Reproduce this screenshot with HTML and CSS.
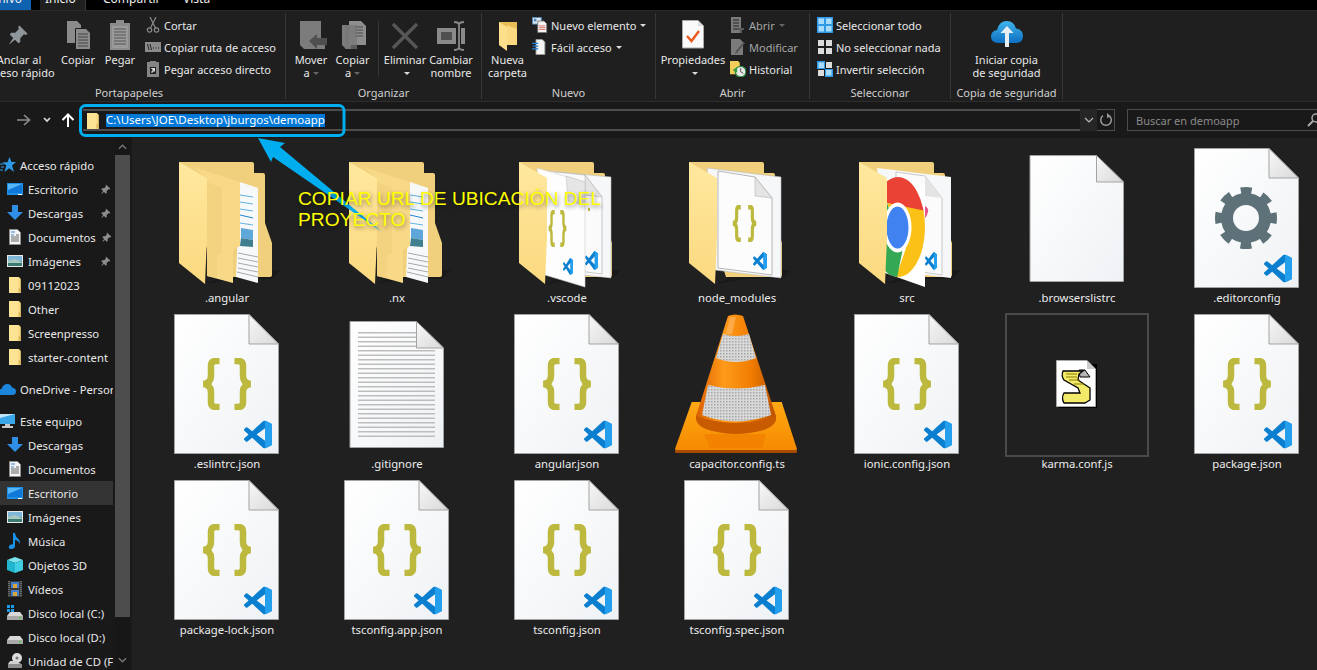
FILE: index.html
```html
<!DOCTYPE html>
<html lang="es">
<head>
<meta charset="utf-8">
<title>demoapp</title>
<link rel="stylesheet" href="styles.css">
</head>
<body>
<svg class="defs" aria-hidden="true">
  <defs>
    <linearGradient id="gFront" x1="0" y1="0" x2="0" y2="1"><stop offset="0" stop-color="#ffe89e"/><stop offset="1" stop-color="#fbd980"/></linearGradient>
    <linearGradient id="gPage" x1="0" y1="0" x2="1" y2="1"><stop offset="0" stop-color="#ffffff"/><stop offset="1" stop-color="#eff2f5"/></linearGradient>
    <linearGradient id="gFold" x1="0" y1="0" x2="1" y2="1"><stop offset="0" stop-color="#f8f8f8"/><stop offset="1" stop-color="#d9d9d9"/></linearGradient>
    <linearGradient id="gCone" x1="0" y1="0" x2="1" y2="0"><stop offset="0" stop-color="#d95f00"/><stop offset=".35" stop-color="#ff9a1a"/><stop offset=".7" stop-color="#f07c00"/><stop offset="1" stop-color="#b94f00"/></linearGradient>
    <linearGradient id="gBase" x1="0" y1="0" x2="0" y2="1"><stop offset="0" stop-color="#ffa913"/><stop offset="1" stop-color="#f58a00"/></linearGradient>
    <linearGradient id="gCloud" x1="0" y1="0" x2="0" y2="1"><stop offset="0" stop-color="#3fb4ef"/><stop offset="1" stop-color="#0f6fc0"/></linearGradient>
    <pattern id="pMesh" width="3" height="3" patternUnits="userSpaceOnUse"><rect width="3" height="3" fill="#d8d8d8"/><rect width="1.500" height="1.500" fill="#a8a8a8"/></pattern>
    <clipPath id="cChrome"><ellipse cx="62" cy="79" rx="27" ry="50"/></clipPath>

    <symbol id="vs" viewBox="0 0 24 24" preserveAspectRatio="none">
      <path fill="#0a7fd0" d="M23.15 2.587L18.21.21a1.494 1.494 0 0 0-1.705.29l-9.46 8.63-4.12-3.128a.999.999 0 0 0-1.276.057L.327 7.261A1 1 0 0 0 .326 8.74L3.899 12 .326 15.26a1 1 0 0 0 .001 1.479L1.65 17.94a.999.999 0 0 0 1.276.057l4.12-3.128 9.46 8.63a1.492 1.492 0 0 0 1.704.29l4.942-2.377A1.5 1.5 0 0 0 24 20.06V3.939a1.5 1.5 0 0 0-.85-1.352zm-5.146 14.861L10.826 12l7.178-5.448v10.896z"/>
      <path fill="#239fee" d="M18 .1l5.15 2.487A1.5 1.5 0 0 1 24 3.939V20.06a1.5 1.5 0 0 1-.85 1.352L18 23.9z"/>
    </symbol>
    <symbol id="braces" viewBox="45 44 51 52" preserveAspectRatio="none">
      <path fill="none" stroke="#bdb93f" stroke-width="6.500" d="M63 47H59Q54.500 47 54.500 52V62Q54.500 69 47 70Q54.500 71 54.500 78V88Q54.500 93 59 93H63M78 47H82Q86.500 47 86.500 52V62Q86.500 69 94 70Q86.500 71 86.500 78V88Q86.500 93 82 93H78"/>
    </symbol>
    <symbol id="page" viewBox="0 0 142 142">
      <path fill="url(#gPage)" stroke="#a3a3a3" d="M18.5.5H93L122.5 30V139.5H18.5z"/>
      <path fill="url(#gFold)" stroke="#a3a3a3" d="M93 .5V30H122.5z"/>
    </symbol>
    <symbol id="blank" viewBox="0 0 142 142">
      <path fill="url(#gPage)" stroke="#a3a3a3" d="M24 7.5H90.5L117.5 34V133.5H24z"/>
      <path fill="url(#gFold)" stroke="#a3a3a3" d="M90.5 7.5V34H117.5z"/>
    </symbol>
    <symbol id="fjson" viewBox="0 0 142 142">
      <use href="#page" width="142" height="142"/>
      <use href="#braces" x="45.5" y="44" width="51" height="52"/>
      <use href="#vs" x="88" y="106.5" width="28" height="28"/>
    </symbol>
    <symbol id="fback" viewBox="0 0 142 142">
      <path fill="#111" opacity=".45" d="M50 136L80 122H125L116 131H80z"/>
      <path fill="#f0d07d" d="M23 14H96Q98 14 98 16V25H107Q109 25 109 27V75L116 95V127Q116 129 114 129H60z"/>
    </symbol>
    <symbol id="fleaf" viewBox="0 0 142 142">
      <path fill="url(#gFront)" d="M23 14L51 30V90L49 136L23 115z"/>
    </symbol>
    <symbol id="fdocs" viewBox="0 0 142 142">
      <use href="#fback" width="142" height="142"/>
      <path fill="#f7f8f9" d="M84 34L102 40V135L80 129z"/>
      <path fill="none" stroke="#62b4e4" stroke-width="1" d="M84 47L97 49M84 54L97 56M84 61L97 63M84 75L97 77"/>
      <path fill="none" stroke="#1d86d0" stroke-width="1" d="M84 67L97 70"/>
      <path fill="#5fa7d8" d="M85 80L97 82V92L85 90z"/>
      <path fill="#3f7f8f" d="M85 90L97 92V99L84 98z"/>
      <path fill="none" stroke="#a9a9a9" stroke-width="1" d="M82 105L102 109M82 110L102 114M82 115L102 119M82 120L102 124M81 124L102 129"/>
      <path fill="#f8d987" d="M37 19L84 34V98L77 102V135L51 128V30z"/>
      <path fill="#f3d280" d="M51 34L66 40V105L61 108V130L51 128z"/>
      <use href="#fleaf" width="142" height="142"/>
    </symbol>
    <symbol id="gearbig" viewBox="0 0 142 142">
      <use href="#page" width="142" height="142"/>
      <circle cx="70" cy="70" r="27.5" fill="none" stroke="#5f7178" stroke-width="7" stroke-dasharray="10.8 10.8" stroke-dashoffset="5.4"/>
      <circle cx="70" cy="70" r="19" fill="none" stroke="#5f7178" stroke-width="12"/>
      <use href="#vs" x="88" y="106.5" width="28" height="28"/>
    </symbol>

    <symbol id="i-pin" viewBox="0 0 24 24">
      <path fill="currentColor" d="M13.5 1.5L22.5 10.5 20.5 12 18.5 11.2 14.5 15.5 14.5 19.5 12.5 21 3 11.5 4.500 9.500H9L13 5.500 12.200 3.500zM6.700 15.300L8.700 17.300 2 22.500z"/>
    </symbol>
    <symbol id="i-folder" viewBox="0 0 16 16">
      <path fill="#f9dc84" d="M2 0H11.800L13.800 2V16H2z"/>
      <path fill="#dbb65c" d="M11.500 11.200H14V14L11.500 16z"/>
      <path fill="#ffe79e" d="M2 0H11V16H2z" opacity=".6"/>
    </symbol>
    <symbol id="i-desk" viewBox="0 0 16 16">
      <path fill="#1c8fe8" d="M0 2H16V14H0z"/><path fill="#55b5f5" d="M1 3H15V12H1z"/><path fill="#1078d8" d="M1 9L15 3V12H1z"/><path fill="#fff" d="M11 13H15V14H11z"/>
    </symbol>
    <symbol id="i-down" viewBox="0 0 16 16">
      <path fill="#2f8fe6" d="M5 0H11V7H16L8 15 0 7H5z"/>
    </symbol>
    <symbol id="i-doc" viewBox="0 0 16 16">
      <path fill="#f4f4f4" stroke="#8f8f8f" d="M2.500.5H10.500L13.500 3.500V15.500H2.500z"/>
      <path stroke="#3b86c9" d="M4 3H8M4 6H7"/><path stroke="#666" d="M4 8H12M4 10H12M4 12H12M9 6H12"/>
    </symbol>
    <symbol id="i-img" viewBox="0 0 16 16">
      <path fill="#e9e9e9" d="M0 2H16V14H0z"/><path fill="#7fb7d8" d="M1 3H15V8H1z"/><path fill="#3a7a72" d="M1 8H15V13H1z"/><path fill="#a8c9c0" d="M1 8L8 6 15 9V10H1z"/>
    </symbol>
    <symbol id="i-star" viewBox="0 0 16 16">
      <path fill="#2f9be8" d="M9.500 0L11.500 5H16L12 8.500 14 15 9.200 11.200 4.500 15 6.300 8.600 2.500 5.200H7.500z"/>
      <path stroke="#2f9be8" d="M0 7H4M1 10H4M0 13H3"/>
    </symbol>
    <symbol id="i-cloud" viewBox="0 0 18 12">
      <path fill="#1c86dc" d="M4 12Q0 12 0 9 0 6 3.500 6 5 1 9.500 1 13 1 14 4.500 18 5 18 8.500 18 12 14 12z"/>
    </symbol>
    <symbol id="i-pc" viewBox="0 0 16 16">
      <path fill="#bfe4f8" d="M0 1H15V11H0z"/><path fill="#3aa7ea" d="M0 5L15 1V11H0z"/><path fill="#c9c9c9" d="M5 11H10V13H13V15H2V13H5z"/>
    </symbol>
    <symbol id="i-music" viewBox="0 0 16 16">
      <path fill="#1b92e8" d="M6 0H8Q8.500 4 12 6.500 13.500 9 12.500 11 12 7.500 8 7V13Q8 16 4 16 1 16 2 13 3 11 6 11.200z"/>
    </symbol>
    <symbol id="i-cube" viewBox="0 0 16 16">
      <path fill="#7ce3ee" d="M8 0L16 3 8 6 0 3z"/><path fill="#20b6cf" d="M0 3L8 6V16L0 13z"/><path fill="#3fcfe2" d="M16 3L8 6V16L16 13z"/>
    </symbol>
    <symbol id="i-film" viewBox="0 0 16 16">
      <path fill="#3b3b3b" d="M1 0H15V16H1z"/><path fill="#3f7fce" d="M4 1H12V7H4z"/><path fill="#3f7fce" d="M4 9H12V15H4z"/><path fill="#d9a53a" d="M6 3H10V7H6zM6 11H10V15H6z"/>
      <path stroke="#999" stroke-dasharray="1 1" d="M2 0V16M14 0V16"/>
    </symbol>
    <symbol id="i-drive" viewBox="0 0 16 16">
      <path fill="#d8d8d8" d="M3 7H13L16 11H0z"/><path fill="#a9a9a9" d="M0 11H16V15H0z"/><path fill="#3fd13f" d="M12 12H14V13.500H12z"/>
    </symbol>
    <symbol id="i-cd" viewBox="0 0 16 16">
      <circle cx="10" cy="5" r="5" fill="#dcdcdc"/><circle cx="10" cy="5" r="1.500" fill="#777"/>
      <path fill="#d0d0d0" d="M3 8H9L14 11H1z"/><path fill="#8c8c8c" d="M1 11H15V15H1z"/>
    </symbol>
    <symbol id="i-sel-all" viewBox="0 0 16 16">
      <path fill="#2f9be8" d="M0 0H16V16H0z"/><path fill="#a9dcfb" d="M1.500 1.500H7V7H1.500zM9 1.500H14.500V7H9zM1.500 9H7V14.500H1.500zM9 9H14.500V14.500H9z"/>
    </symbol>
    <symbol id="i-sel-none" viewBox="0 0 16 16">
      <path fill="#dcdcdc" d="M1 1H7V7H1zM9 1H15V7H9zM1 9H7V15H1zM9 9H15V15H9z"/>
    </symbol>
    <symbol id="i-sel-inv" viewBox="0 0 16 16">
      <path fill="#2f9be8" d="M0 0H8V8H0zM8 8H16V16H8z"/><path fill="#a9dcfb" d="M1.500 1.500H7V7H1.500zM9 9H14.500V14.500H9z"/><path fill="#dcdcdc" d="M9 1H15V7H9zM1 9H7V15H1z"/>
    </symbol>
  </defs>
</svg>

<div class="window">
  <nav class="tabs">
    <span class="tab tab-file"><span class="tab-text">Archivo</span></span>
    <span class="tab tab-home"><span class="tab-text">Inicio</span></span>
    <span class="tab tab-share"><span class="tab-text">Compartir</span></span>
    <span class="tab tab-view"><span class="tab-text">Vista</span></span>
  </nav>

  <section class="ribbon">
    <div class="group g-clip">
      <div class="tools">
        <div class="big w-pin">
          <svg class="ico32 pin-col" viewBox="0 0 32 32"><use href="#i-pin" x="4" y="5" width="22" height="22"/></svg>
          <span>Anclar al<br>acceso rápido</span>
        </div>
        <div class="big w-42">
          <svg class="ico32" viewBox="0 0 32 32"><path fill="#8b8b8b" d="M5 2H15L19 6V24H5z"/><path fill="#8b8b8b" stroke="#1f1f1f" d="M13.500 9.500H24L28.500 14V30.500H13.500z"/><path stroke="#444" d="M16 15H26M16 18H26M16 21H26M16 24H26M16 27H26"/></svg>
          <span>Copiar</span>
        </div>
        <div class="big w-42">
          <svg class="ico32" viewBox="0 0 32 32"><path fill="#8b8b8b" d="M6 4H12V1H20V4H26V31H6z"/><path fill="#9a9a9a" d="M8 7H24V29H8z"/><path stroke="#555" d="M10 10H22M10 13H22M10 16H22M10 19H22M10 22H22M10 25H22"/></svg>
          <span>Pegar</span>
        </div>
        <div class="list">
          <div class="small"><svg class="ico16" viewBox="0 0 16 16"><path fill="none" stroke="#8a8a8a" stroke-width="1.200" d="M5 0L10.500 11M11 0L5.500 11"/><circle cx="4.500" cy="13" r="2.200" fill="none" stroke="#8a8a8a" stroke-width="1.200"/><circle cx="11.500" cy="13" r="2.200" fill="none" stroke="#8a8a8a" stroke-width="1.200"/></svg><span>Cortar</span></div>
          <div class="small"><svg class="ico16" viewBox="0 0 16 16"><path fill="#8a8a8a" d="M0 3H16V13H0z"/><path stroke="#222" d="M2.500 5L4 11M5 5L6.500 11M8 9H9M10.500 9H11.500M13 9H14"/></svg><span>Copiar ruta de acceso</span></div>
          <div class="small"><svg class="ico16" viewBox="0 0 16 16"><path fill="#858585" d="M2 1H5V0H11V1H14V16H2z"/><path fill="#222" d="M5 6H11V13H5z"/><path fill="#ddd" d="M6 7H10V11L9 10 7 12 6 11 8 9 6.500 8z"/></svg><span>Pegar acceso directo</span></div>
        </div>
      </div>
      <div class="glabel">Portapapeles</div>
    </div>

    <div class="group g-org">
      <div class="tools">
        <div class="big w-42">
          <svg class="ico32" viewBox="0 0 32 32"><path fill="#7c7c7c" d="M5 2H26V22H30V30H9L5 26z"/><path fill="#4f4f4f" d="M14 22L22 15V19H32V26H22V30z"/></svg>
          <span>Mover<br>a<i class="caret dim"></i></span>
        </div>
        <div class="big w-41">
          <svg class="ico32" viewBox="0 0 32 32"><path fill="#7c7c7c" d="M5 6H14V30H9L5 26z"/><path fill="#8e8e8e" d="M12 2H24L29 7V26H12z"/><path stroke="#4a4a4a" d="M18 8H26M18 11H26M18 14H26M18 17H26"/><path fill="#767676" d="M8 6H20V30H8z" opacity=".7"/></svg>
          <span>Copiar<br>a<i class="caret dim"></i></span>
        </div>
        <div class="rule"></div>
        <div class="big w-42">
          <svg class="ico32" viewBox="0 0 32 32"><path fill="none" stroke="#565656" stroke-width="3.500" d="M4 5L28 29M28 5L4 29"/></svg>
          <span>Eliminar<br><i class="caret"></i></span>
        </div>
        <div class="big w-50">
          <svg class="ico32 wide" viewBox="0 0 32 32"><path fill="#8a8a8a" d="M2 9H21V25H2z"/><path fill="#4f4f4f" d="M6 13H17V21H6z"/><path fill="none" stroke="#888" stroke-width="1.800" d="M19 3Q23 3 24 5Q25 3 29 3M24 5V29M19 31Q23 31 24 29Q25 31 29 31"/><path fill="#8a8a8a" d="M26 9H30V25H26z"/></svg>
          <span>Cambiar<br>nombre</span>
        </div>
      </div>
      <div class="glabel">Organizar</div>
    </div>

    <div class="group g-new">
      <div class="tools">
        <div class="big w-nf">
          <svg class="ico32" viewBox="0 0 32 32"><path fill="#e7bd55" d="M7 3H25V26H15z"/><path fill="#fbd980" d="M15 6L25 10V26H15z"/><path fill="#fde08c" d="M7 3L15 8V32L7 26z"/></svg>
          <span>Nueva<br>carpeta</span>
        </div>
        <div class="list">
          <div class="small"><svg class="ico16 up1" viewBox="0 0 18 18"><path fill="#dfe7ee" stroke="#4e87b8" d="M.500.500H10.500V8H.500z"/><path fill="#4e87b8" d="M2 2H5V5H2z"/><path fill="#f4f4f4" stroke="#777" d="M6.500 4.500H13.500L16.500 7.500V17.500H6.500z"/><path stroke="#d76b5a" d="M8 10H15M8 12H15M8 14H15"/></svg><span>Nuevo elemento</span><i class="caret"></i></div>
          <div class="small"><svg class="ico16 up1" viewBox="0 0 18 18"><path fill="#f5f5f5" stroke="#999" d="M4.500.500H11.500L14.500 3.500V17.500H4.500z"/><path stroke="#1c7fd8" stroke-width="1.400" d="M0 5H7M1 8H7M0 11H7"/></svg><span>Fácil acceso</span><i class="caret"></i></div>
        </div>
      </div>
      <div class="glabel">Nuevo</div>
    </div>

    <div class="group g-open">
      <div class="tools">
        <div class="big w-prop">
          <svg class="ico32" viewBox="0 0 32 32"><path fill="#fafafa" stroke="#aaa" d="M5.500 4.500H21L26.500 10V32H5.500z" transform="translate(0 -3)"/><path fill="#ddd" d="M21 1.500V7H26.500z"/><path fill="none" stroke="#ea5a1c" stroke-width="2.400" d="M10 17L14.500 22L22 12"/></svg>
          <span>Propiedades<br><i class="caret"></i></span>
        </div>
        <div class="list">
          <div class="small dim-text"><svg class="ico16" viewBox="0 0 16 16"><path fill="#7b7b7b" d="M1 0H11V16H1z"/><path stroke="#222" d="M3 3H9M3 6H9M3 9H9M3 12H9"/><path fill="#5c5c5c" d="M9 11H14V13H12V16H10z"/></svg><span>Abrir</span><i class="caret dim"></i></div>
          <div class="small dim-text"><svg class="ico16" viewBox="0 0 16 16"><path fill="#7b7b7b" d="M1 0H10L13 3V16H1z"/><path fill="#555" d="M15 4L7 14 5 15 6 12 13.500 3z"/></svg><span>Modificar</span></div>
          <div class="small"><svg class="ico16" viewBox="0 0 18 18"><path fill="#f2cd5a" d="M0 0H9L11 2V15H0z"/><circle cx="12" cy="12" r="6" fill="#e8e8e8" stroke="#2b8a3e" stroke-width="1.500"/><path fill="none" stroke="#444" d="M12 8V12L15 14"/><path fill="#2d9a3f" d="M3 10L8 7V13z"/></svg><span>Historial</span></div>
        </div>
      </div>
      <div class="glabel">Abrir</div>
    </div>

    <div class="group g-sel">
      <div class="tools">
        <div class="list list-sel">
          <div class="small"><svg class="ico16" viewBox="0 0 16 16"><use href="#i-sel-all"/></svg><span>Seleccionar todo</span></div>
          <div class="small"><svg class="ico16" viewBox="0 0 16 16"><use href="#i-sel-none"/></svg><span>No seleccionar nada</span></div>
          <div class="small"><svg class="ico16" viewBox="0 0 16 16"><use href="#i-sel-inv"/></svg><span>Invertir selección</span></div>
        </div>
      </div>
      <div class="glabel">Seleccionar</div>
    </div>

    <div class="group g-bak">
      <div class="tools">
        <div class="big w-bak">
          <svg class="ico32" viewBox="0 0 32 32"><path fill="url(#gCloud)" d="M7 24Q0 24 0 17.500 0 12 6 11 8 2 16 2 23 2 25 9.500 32 10.500 32 17 32 24 25 24z"/><path fill="#e9eef2" d="M16 7L22.500 14H18V28H14V14H9.500z"/></svg>
          <span>Iniciar copia<br>de seguridad</span>
        </div>
      </div>
      <div class="glabel">Copia de seguridad</div>
    </div>
  </section>

  <section class="addressbar">
    <div class="navs">
      <svg class="nav-back" viewBox="0 0 14 12"><path fill="none" stroke="#8d8d8d" stroke-width="1.600" d="M0 6H12M7 1L12.500 6 7 11"/></svg>
      <svg class="nav-caret" viewBox="0 0 8 6"><path fill="none" stroke="#ddd" stroke-width="1.700" d="M1 1L4 4 7 1"/></svg>
      <svg class="nav-up" viewBox="0 0 14 14"><path fill="none" stroke="#fff" stroke-width="2" d="M7 14V2M1.500 7L7 1.500 12.500 7"/></svg>
    </div>
    <div class="field">
      <svg class="ico16 field-ico" viewBox="0 0 16 16"><use href="#i-folder"/></svg>
      <span class="path">C:\Users\JOE\Desktop\jburgos\demoapp</span>
    </div>
    <div class="dropbtn"><svg viewBox="0 0 10 6" class="chev"><path fill="none" stroke="#bbb" stroke-width="1.200" d="M1 1L5 5 9 1"/></svg></div>
    <div class="refresh"><svg viewBox="0 0 14 14" class="ref-ico"><path fill="none" stroke="#999" stroke-width="1.500" d="M10.500 3A5.300 5.300 0 1 1 4 2.700"/><path fill="#999" d="M8 0L12 3.500 8 5z"/></svg></div>
    <div class="search"><span>Buscar en demoapp</span><svg viewBox="0 0 14 14" class="search-ico"><circle cx="9" cy="5" r="4" fill="none" stroke="#aaa" stroke-width="1.500"/><path stroke="#aaa" stroke-width="2" d="M6 8L1 13"/></svg></div>
  </section>

  <div class="body">
    <aside class="sidebar">
      <div class="tree">
        <div class="row l1 gap-after"><svg class="ico16" viewBox="0 0 16 16"><use href="#i-star"/></svg><span>Acceso rápido</span></div>
        <div class="row l2"><svg class="ico16" viewBox="0 0 16 16"><use href="#i-desk"/></svg><span>Escritorio</span><svg class="pin-mini" viewBox="0 0 24 24"><use href="#i-pin"/></svg></div>
        <div class="row l2"><svg class="ico16" viewBox="0 0 16 16"><use href="#i-down"/></svg><span>Descargas</span><svg class="pin-mini" viewBox="0 0 24 24"><use href="#i-pin"/></svg></div>
        <div class="row l2"><svg class="ico16" viewBox="0 0 16 16"><use href="#i-doc"/></svg><span>Documentos</span><svg class="pin-mini" viewBox="0 0 24 24"><use href="#i-pin"/></svg></div>
        <div class="row l2"><svg class="ico16" viewBox="0 0 16 16"><use href="#i-img"/></svg><span>Imágenes</span><svg class="pin-mini" viewBox="0 0 24 24"><use href="#i-pin"/></svg></div>
        <div class="row l2"><svg class="ico16" viewBox="0 0 16 16"><use href="#i-folder"/></svg><span>09112023</span></div>
        <div class="row l2"><svg class="ico16" viewBox="0 0 16 16"><use href="#i-folder"/></svg><span>Other</span></div>
        <div class="row l2"><svg class="ico16" viewBox="0 0 16 16"><use href="#i-folder"/></svg><span>Screenpresso</span></div>
        <div class="row l2"><svg class="ico16" viewBox="0 0 16 16"><use href="#i-folder"/></svg><span>starter-content</span></div>
        <div class="row l1 sect"><svg class="ico-cloud" viewBox="0 0 18 12"><use href="#i-cloud"/></svg><span>OneDrive - Personal</span></div>
        <div class="row l1 sect"><svg class="ico16" viewBox="0 0 16 16"><use href="#i-pc"/></svg><span>Este equipo</span></div>
        <div class="row l2"><svg class="ico16" viewBox="0 0 16 16"><use href="#i-down"/></svg><span>Descargas</span></div>
        <div class="row l2"><svg class="ico16" viewBox="0 0 16 16"><use href="#i-doc"/></svg><span>Documentos</span></div>
        <div class="row l2 active"><svg class="ico16" viewBox="0 0 16 16"><use href="#i-desk"/></svg><span>Escritorio</span></div>
        <div class="row l2"><svg class="ico16" viewBox="0 0 16 16"><use href="#i-img"/></svg><span>Imágenes</span></div>
        <div class="row l2"><svg class="ico16" viewBox="0 0 16 16"><use href="#i-music"/></svg><span>Música</span></div>
        <div class="row l2"><svg class="ico16" viewBox="0 0 16 16"><use href="#i-cube"/></svg><span>Objetos 3D</span></div>
        <div class="row l2"><svg class="ico16" viewBox="0 0 16 16"><use href="#i-film"/></svg><span>Vídeos</span></div>
        <div class="row l2"><svg class="ico16" viewBox="0 0 16 16"><use href="#i-drive"/><path fill="#1c9be8" d="M0 0H3V3H0zM4 0H7V3H4zM0 4H3V7H0zM4 4H7V7H4z"/></svg><span>Disco local (C:)</span></div>
        <div class="row l2"><svg class="ico16" viewBox="0 0 16 16"><use href="#i-drive"/></svg><span>Disco local (D:)</span></div>
        <div class="row l2"><svg class="ico16" viewBox="0 0 16 16"><use href="#i-cd"/></svg><span>Unidad de CD (F:)</span></div>
      </div>
      <div class="scrollbar">
        <svg class="sb-arrow" viewBox="0 0 10 6"><path fill="none" stroke="#777" stroke-width="1.500" d="M1 5L5 1 9 5"/></svg>
        <div class="sb-thumb"></div>
        <svg class="sb-arrow sb-down" viewBox="0 0 10 6"><path fill="none" stroke="#777" stroke-width="1.500" d="M1 1L5 5 9 1"/></svg>
      </div>
    </aside>

    <main class="files">
      <figure class="file">
        <svg class="thumb" viewBox="0 0 142 142"><use href="#fdocs"/></svg>
        <figcaption>.angular</figcaption>
      </figure>
      <figure class="file">
        <svg class="thumb" viewBox="0 0 142 142"><use href="#fdocs"/></svg>
        <figcaption>.nx</figcaption>
      </figure>
      <figure class="file">
        <svg class="thumb" viewBox="0 0 142 142">
          <use href="#fback"/>
          <path fill="#f6f7f8" stroke="#bbb" stroke-width=".6" d="M52 23L115 29V130L60 124z"/>
          <path fill="#fafafa" stroke="#aaa" stroke-width=".6" d="M60 24L89 27L106 49V126L60 120z"/>
          <path fill="#e4e4e4" stroke="#aaa" stroke-width=".5" d="M89 27V47L106 49z"/>
          <path fill="#bdb93f" d="M92 60H94V63H92z"/>
          <use href="#vs" x="89" y="103" width="13" height="19"/>
          <path fill="#fdfdfd" stroke="#ccc" stroke-width=".6" d="M41 20L89 34V139L49 127z"/>
          <path fill="#e6e6e6" stroke="#bbb" stroke-width=".5" d="M70 28L89 34V57L72 53z"/>
          <use href="#braces" x="52" y="62" width="19" height="37"/>
          <use href="#vs" x="67" y="110" width="10" height="17"/>
          <use href="#fleaf"/>
        </svg>
        <figcaption>.vscode</figcaption>
      </figure>
      <figure class="file">
        <svg class="thumb" viewBox="0 0 142 142">
          <use href="#fback"/>
          <path fill="#f6f7f8" stroke="#bbb" stroke-width=".6" d="M41 20L115 29V130L49 122z"/>
          <path fill="#fcfcfc" stroke="#999" stroke-width=".7" d="M52 23L89 29L106 50V127L52 120z"/>
          <path fill="#e4e4e4" stroke="#aaa" stroke-width=".5" d="M89 29V48L106 50z"/>
          <use href="#braces" x="66" y="57" width="25" height="37"/>
          <use href="#vs" x="87" y="104" width="14" height="18"/>
          <use href="#fleaf"/>
        </svg>
        <figcaption>node_modules</figcaption>
      </figure>
      <figure class="file">
        <svg class="thumb" viewBox="0 0 142 142">
          <use href="#fback"/>
          <path fill="#f6f7f8" d="M41 20L115 29V130L49 122z"/>
          <path fill="#fbfbfb" stroke="#aaa" stroke-width=".6" d="M60 24L89 28L106 50V127L60 120z"/>
          <path fill="#e4e4e4" d="M89 28V48L106 50z"/>
          <path fill="#e8558a" d="M89 58Q93 60 92 64 91 68 89 70z"/>
          <use href="#vs" x="89" y="104" width="12" height="18"/>
          <path fill="#fff" d="M47 29L89 37V139L49 125z"/>
          <g clip-path="url(#cChrome)">
            <path fill="#ea4335" d="M30 20H95L88 64 51 55z"/>
            <path fill="#fbc116" d="M51 55L100 65V135H58L70 100z"/>
            <path fill="#34a853" d="M30 55H51L67 100 60 135H30z"/>
            <ellipse cx="61.500" cy="79.500" rx="14" ry="25" fill="#fff"/>
            <ellipse cx="61.500" cy="79.500" rx="11" ry="21" fill="#3f82f0"/>
          </g>
          <use href="#fleaf"/>
        </svg>
        <figcaption>src</figcaption>
      </figure>
      <figure class="file">
        <svg class="thumb" viewBox="0 0 142 142"><use href="#blank"/></svg>
        <figcaption>.browserslistrc</figcaption>
      </figure>
      <figure class="file">
        <svg class="thumb" viewBox="0 0 142 142"><use href="#gearbig"/></svg>
        <figcaption>.editorconfig</figcaption>
      </figure>

      <figure class="file">
        <svg class="thumb" viewBox="0 0 142 142"><use href="#fjson"/></svg>
        <figcaption>.eslintrc.json</figcaption>
      </figure>
      <figure class="file">
        <svg class="thumb" viewBox="0 0 142 142">
          <path fill="url(#gPage)" stroke="#a3a3a3" d="M24 7.500H90.500L117.500 34V133.500H24z"/>
          <path stroke="#bdbdbd" stroke-width="77" stroke-dasharray="1.500 3" d="M70.500 36V124"/>
          <path stroke="#bdbdbd" stroke-width="58" stroke-dasharray="1.500 3" d="M61 18V33"/>
          <path fill="url(#gFold)" stroke="#a3a3a3" d="M90.500 7.500V34H117.500z"/>
        </svg>
        <figcaption>.gitignore</figcaption>
      </figure>
      <figure class="file">
        <svg class="thumb" viewBox="0 0 142 142"><use href="#fjson"/></svg>
        <figcaption>angular.json</figcaption>
      </figure>
      <figure class="file">
        <svg class="thumb" viewBox="0 0 142 142">
          <path fill="#a84b00" d="M9 136L131 136 131 138Q131 139 129 139H11Q9 139 9 138z"/>
          <path fill="url(#gBase)" d="M25.700 88H115.700L131 135Q131 136 129 136H11Q9 136 9 135z"/>
          <path fill="#f17d00" opacity=".7" d="M38 120H100L96 134H44z"/>
          <path fill="url(#gCone)" d="M62 2Q69 -1 77 2L110 102Q112 118 70 120Q28 118 30 102z"/>
          <path fill="#c85a00" d="M30 102Q28 118 70 120Q112 118 110 102Q70 116 30 102z"/>
          <path fill="url(#pMesh)" d="M57 20Q70 24 83 20L90 44Q70 52 50 44z"/>
          <path fill="url(#pMesh)" d="M42 71Q70 78 99 71L105 101Q70 114 36 101z"/>
          <path fill="#ffc37a" opacity=".5" d="M64 3H70L66 20H60z"/>
        </svg>
        <figcaption>capacitor.config.ts</figcaption>
      </figure>
      <figure class="file">
        <svg class="thumb" viewBox="0 0 142 142"><use href="#fjson"/></svg>
        <figcaption>ionic.config.json</figcaption>
      </figure>
      <figure class="file file-sel">
        <svg class="thumb" viewBox="0 0 142 142">
          <path fill="#000" d="M53 50H91V94H53z"/>
          <path fill="#fff" stroke="#aaa" d="M50.500 46.500H81L89.500 55V92.500H50.500z"/>
          <path fill="#ccc" d="M81 47V55H89z"/>
          <path fill="#b5b5b5" stroke="#000" d="M73 56H79L84 63H74z"/>
          <path fill="#f3ea6a" stroke="#000" stroke-width="1.300" d="M57 57H77L73 60 72 66 84 74V86L79 89H58Q55 84 58 79H74L72 74 58 66Q55 62 57 57z"/>
          <path stroke="#8a7d00" d="M60 60H71M60 63H71M63 66H74M68 70H78"/>
        </svg>
        <figcaption>karma.conf.js</figcaption>
      </figure>
      <figure class="file">
        <svg class="thumb" viewBox="0 0 142 142"><use href="#fjson"/></svg>
        <figcaption>package.json</figcaption>
      </figure>

      <figure class="file">
        <svg class="thumb" viewBox="0 0 142 142"><use href="#fjson"/></svg>
        <figcaption>package-lock.json</figcaption>
      </figure>
      <figure class="file">
        <svg class="thumb" viewBox="0 0 142 142"><use href="#fjson"/></svg>
        <figcaption>tsconfig.app.json</figcaption>
      </figure>
      <figure class="file">
        <svg class="thumb" viewBox="0 0 142 142"><use href="#fjson"/></svg>
        <figcaption>tsconfig.json</figcaption>
      </figure>
      <figure class="file">
        <svg class="thumb" viewBox="0 0 142 142"><use href="#fjson"/></svg>
        <figcaption>tsconfig.spec.json</figcaption>
      </figure>
    </main>
  </div>

  <svg class="markup" viewBox="0 0 1317 670" aria-hidden="true">
    <rect x="80.500" y="105.500" width="263.500" height="30" rx="5" fill="none" stroke="#00aeef" stroke-width="3"/>
    <path fill="#00aeef" d="M258 138L285 143 280 147 382 232 273 157 271 162z"/>
  </svg>
  <p class="note">COPIAR URL DE UBICACIÓN DEL PROYECTO</p>
</div>
</body>
</html>
```

FILE: styles.css
```css
* { box-sizing: border-box; }
html, body { margin: 0; height: 100%; background: #202020; overflow: hidden; }
body { font: 11px/13px "Noto Sans", sans-serif; color: #e8e8e8; }
.defs { display: block; width: 0; height: 0; }
svg { display: block; flex: none; }

.window { position: relative; width: 1317px; height: 670px; overflow: hidden; display: flex; flex-direction: column; }

/* tabs */
.tabs { height: 10px; background: #000; display: flex; overflow: hidden; flex: none; }
.tab { display: block; height: 10px; overflow: hidden; color: #eee; font-size: 12px; }
.tab-text { display: block; margin-top: -9px; line-height: 16px; white-space: nowrap; }
.tab-file { width: 31px; background: #0f62b0; display: flex; justify-content: flex-end; padding-right: 9px; }
.tab-home { width: 46px; margin-left: 9px; padding-left: 5px; background: #1f1f1f; border-right: 1px solid #3a3a3a; }
.tab-share { margin-left: 17px; width: 80px; }
.tab-view { width: 40px; }

/* ribbon */
.ribbon { height: 92px; flex: none; background: #1f1f1f; display: flex; border-top: 1px solid #2a2a2a; border-bottom: 1px solid #2d2d2d; }
.group { display: flex; flex-direction: column; border-right: 1px solid #363636; margin: 2px 0 2px; }
.tools { height: 74px; display: flex; padding-top: 6px; }
.glabel { height: 14px; line-height: 16px; text-align: center; color: #cfcfcf; white-space: nowrap; }
.g-clip { width: 313px; margin-left: -27px; }
.g-clip .tools { padding-left: 8px; }
.g-org { width: 196px; }
.g-org .tools { padding-left: 4px; }
.g-new { width: 174px; }
.g-new .tools { padding-left: 5px; }
.g-open { width: 154px; }
.g-open .tools { padding-left: 4px; }
.g-sel { width: 141px; }
.g-sel .tools { padding-left: 0; }
.g-bak { width: 112px; }

.big { display: flex; flex-direction: column; align-items: center; text-align: center; white-space: nowrap; }
.big span { display: block; margin-top: 2px; }
.ico32 { width: 32px; height: 32px; }
.pin-col { color: #8f969b; }
.w-pin { width: 76px; }
.w-42 { width: 42px; }
.w-41 { width: 41px; }
.w-50 { width: 50px; }
.w-nf { width: 41px; }
.w-prop { width: 66px; }
.w-bak { width: 111px; }
.rule { width: 1px; height: 55px; background: #363636; margin: 2px 5px 0; }

.list { display: flex; flex-direction: column; margin: -5px 0 0 4px; }
.list-sel { margin-left: 7px; }
.small { height: 22px; display: flex; align-items: center; gap: 3px; white-space: nowrap; }
.dim-text { color: #a5a5a5; }
.ico16 { width: 16px; height: 16px; }
.caret { display: inline-block; border: 3px solid transparent; border-top: 3px solid #dcdcdc; border-bottom: 0; margin-left: 3px; vertical-align: 2px; }
.small .caret { margin-left: 1px; }
.caret.dim { border-top-color: #666; }

/* address */
.addressbar { height: 36px; flex: none; background: #191919; display: flex; align-items: center; }
.navs { width: 83px; display: flex; align-items: center; flex: none; }
.nav-back { width: 14px; height: 12px; margin-left: 17px; }
.nav-caret { width: 8px; height: 6px; margin-left: 12px; }
.nav-up { width: 14px; height: 14px; margin-left: 10px; }
.field { width: 997px; flex: none; height: 22px; border-top: 2px solid #4d4d4d; border-bottom: 2px solid #4d4d4d; display: flex; align-items: center; padding-left: 2px; gap: 5px; color: #fff; }
.field-ico { margin-top: 1px; }
.path { background: #0078d7; line-height: 12px; height: 13px; font-size: 11.5px; white-space: nowrap; }
.dropbtn { width: 17px; flex: none; height: 22px; background: #262626; display: flex; align-items: center; justify-content: center; }
.chev { width: 10px; height: 6px; }
.refresh { width: 18px; flex: none; height: 22px; border: 1px solid #4d4d4d; border-left: 0; display: flex; align-items: center; justify-content: center; }
.ref-ico { width: 14px; height: 14px; }
.search { width: 200px; height: 22px; margin-left: 12px; border: 1px solid #4d4d4d; display: flex; align-items: center; padding-left: 8px; color: #8a8a8a; flex: none; white-space: nowrap; }
.search-ico { width: 14px; height: 14px; margin-left: 67px; }

/* body */
.body { flex: 1; min-height: 0; display: flex; }
.sidebar { width: 132px; flex: none; display: flex; background: #191919; overflow: hidden; font-size: 11.3px; }
.tree { width: 115px; flex: none; padding-top: 15px; }
.row { width: 113px; height: 24px; display: flex; align-items: center; white-space: nowrap; overflow: hidden; }
.l1 { gap: 4px; padding-left: 0; }
.l2 { gap: 5px; padding-left: 7px; }
.sect { margin-top: 8px; }
.active { background: #333; }
.ico-cloud { width: 18px; height: 12px; margin-left: -2px; }
.pin-mini { width: 11px; height: 11px; color: #8e8e8e; margin-left: auto; margin-right: 2px; }
.scrollbar { width: 15px; flex: none; background: #171717; display: flex; flex-direction: column; align-items: center; }
.sb-arrow { width: 9px; height: 6px; margin: 6px 0 5px; }
.sb-thumb { width: 15px; height: 462px; background: #4d4d4d; }
.sb-down { margin-top: 40px; }

.files { flex: 1; min-width: 0; padding: 10px 0 0 10px; display: grid; grid-template-columns: repeat(7, 170px); grid-auto-rows: 166px; align-content: start; overflow: hidden; }
.file { margin: 0; display: flex; flex-direction: column; align-items: center; }
.thumb { width: 142px; height: 142px; }
.file figcaption { line-height: 16px; font-size: 11.3px; color: #ececec; white-space: nowrap; }
.file-sel .thumb { outline: 2px solid #4a4a4a; outline-offset: -1px; }

/* annotation */
.markup { position: absolute; left: 0; top: 0; width: 1317px; height: 670px; pointer-events: none; }
.note { position: absolute; left: 298px; top: 188px; width: 320px; margin: 0; font: 19.2px/21px "Liberation Sans", Arial, sans-serif; color: #ffff00; text-shadow: 1px 2px 4px rgba(0,0,0,.45); }
```
